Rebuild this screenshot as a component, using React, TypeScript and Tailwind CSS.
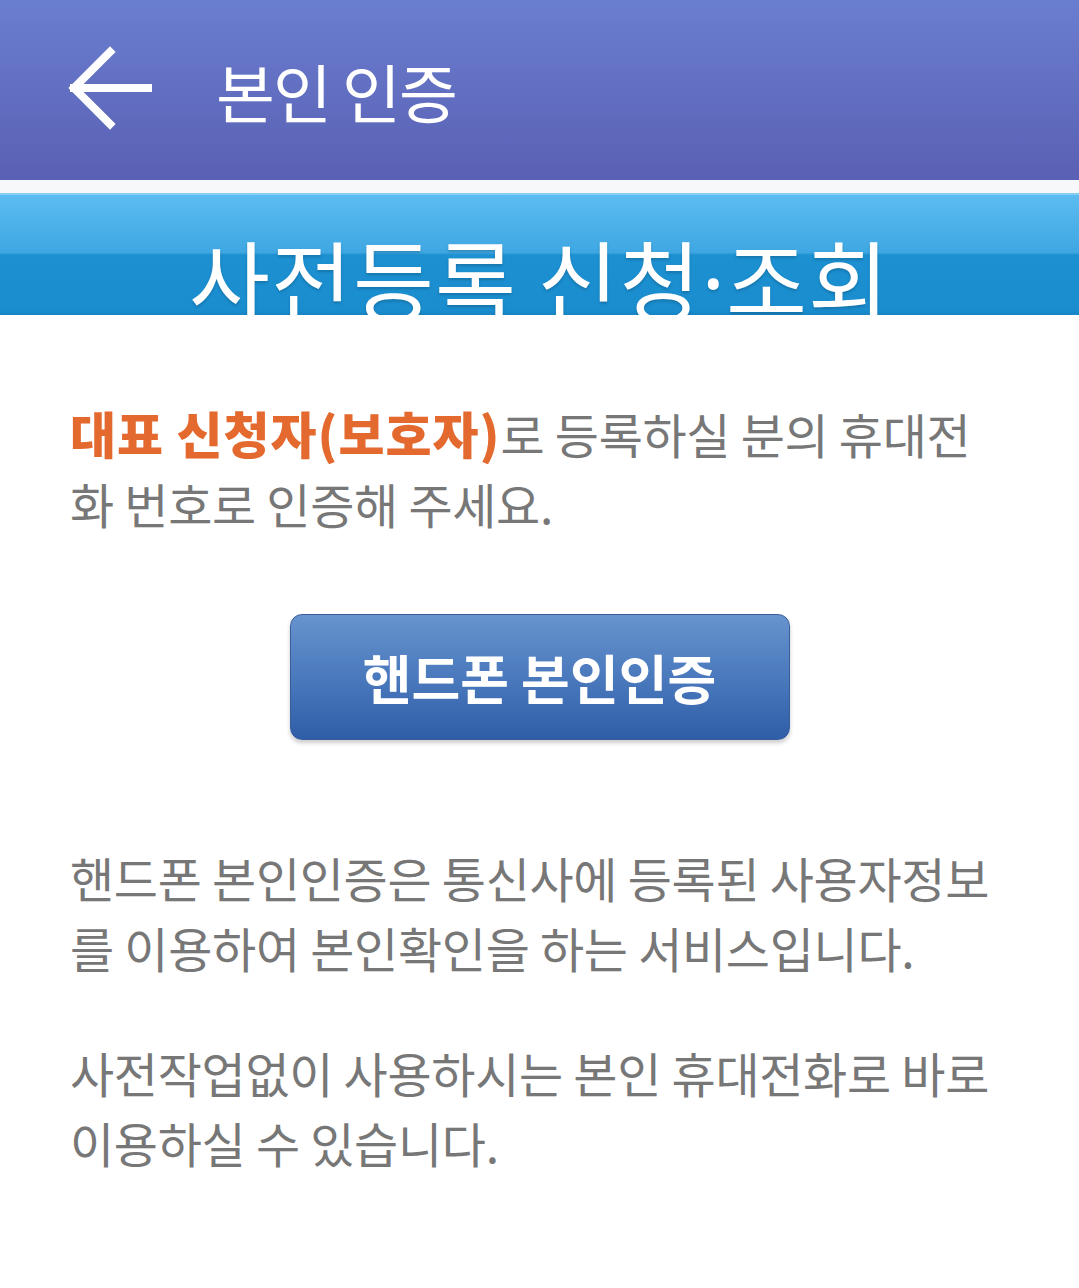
import React from "react";

const FONT = { fontFamily: '"Noto Sans CJK KR", "Noto Sans", sans-serif' };

function BackArrow() {
  return (
    <svg width="88" height="88" viewBox="0 0 88 88" className="shrink-0">
      <path
        d="M84 42H10M46 6L10 42l36 36"
        fill="none"
        stroke="#fff"
        strokeWidth="8"
        strokeLinecap="square"
      />
    </svg>
  );
}

export default function App() {
  return (
    <div className="min-h-[1288px] w-full bg-white" style={FONT}>
      {/* Header */}
      <header className="flex h-[180px] items-center bg-[linear-gradient(to_bottom,#6a7ecf,#5a60b4)] pl-[64px]">
        <BackArrow />
        <h1 className="ml-[64px] text-[64px] leading-none font-normal text-white tracking-[-2px]">
          본인 인증
        </h1>
      </header>

      <div className="h-[13px] bg-[#f6f8fa]" />

      {/* Banner */}
      <div className="relative h-[122px] border-t-2 border-[#86cdf4] bg-[linear-gradient(to_bottom,#5cbcf1_0%,#3ea7e2_48%,#1c90d1_50%,#1a8dcf_96%,#1784c4_100%)]">
        <div className="absolute top-[38px] left-0 w-full text-center text-[88px] leading-none text-white [text-shadow:0_2px_3px_rgba(0,0,0,0.18)] tracking-[1px]">
          사전등록 신청<span style={{ fontFamily: '"Noto Sans", sans-serif' }}>·</span>조회
        </div>
      </div>

      {/* Body */}
      <div className="relative bg-white px-[70px] pt-[82px] text-[48px] leading-[70px] text-[#777777] tracking-[-0.3px]">
        <p>
          <span className="font-black text-[#e4692e] text-[50px] tracking-[1px]">대표 신청자(보호자)</span>로 등록하실 분의 휴대전
          <br />
          화 번호로 인증해 주세요.
        </p>

        <div className="mt-[76px] flex justify-center">
          <button className="h-[126px] w-[500px] rounded-[12px] border border-[#3b5d9c] bg-[linear-gradient(to_bottom,#6794cd,#4a79bd_50%,#2f5ea8)] text-[53px] font-bold text-white tracking-[0px] shadow-[0_3px_4px_rgba(0,0,0,0.2)]">
            핸드폰 본인인증
          </button>
        </div>

        <p className="mt-[102px]">
          핸드폰 본인인증은 통신사에 등록된 사용자정보
          <br />
          를 이용하여 본인확인을 하는 서비스입니다.
        </p>

        <p className="mt-[55px]">
          사전작업없이 사용하시는 본인 휴대전화로 바로
          <br />
          이용하실 수 있습니다.
        </p>
      </div>
    </div>
  );
}
